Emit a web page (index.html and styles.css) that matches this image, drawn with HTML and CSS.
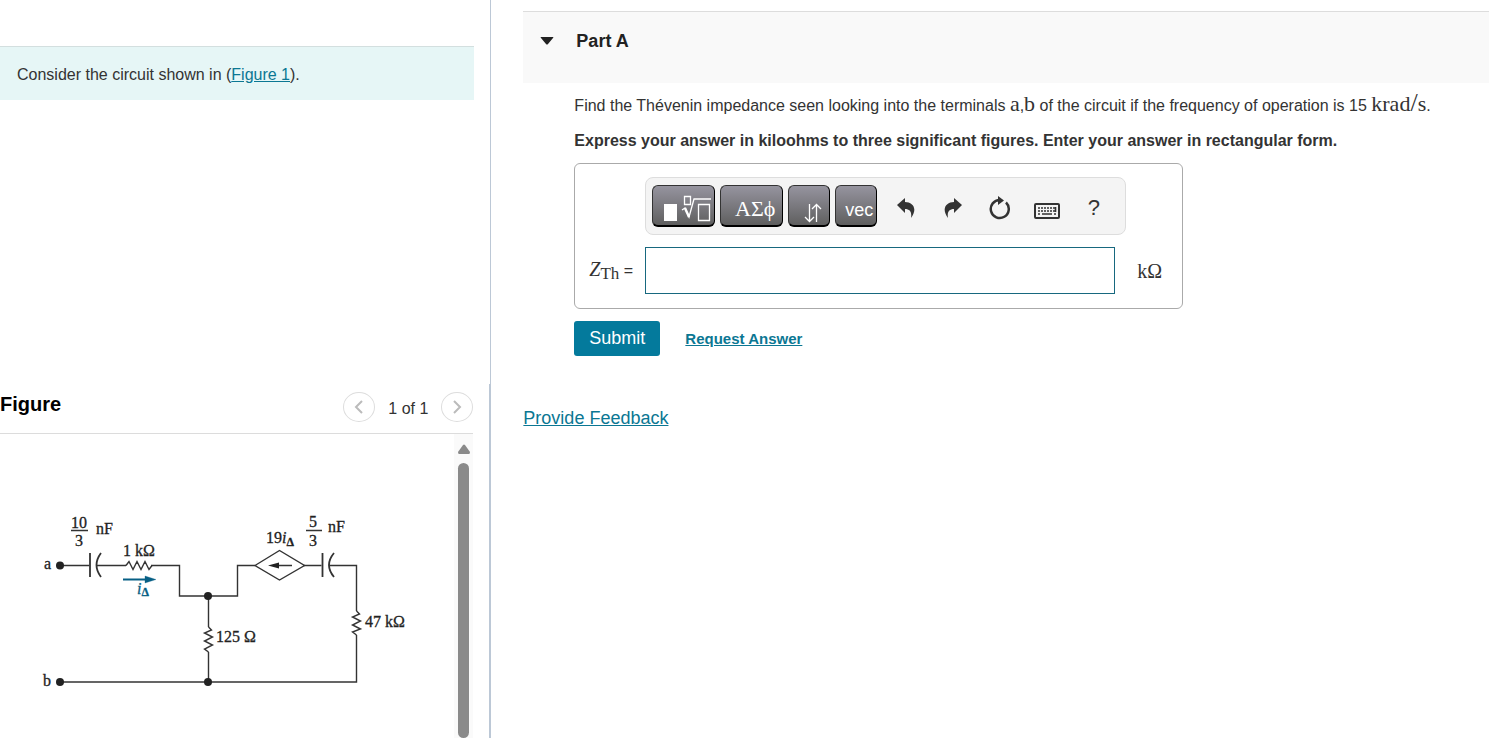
FILE: index.html
```html
<!DOCTYPE html>
<html lang="en">
<head>
    <meta charset="UTF-8">
    <meta name="viewport" content="width=device-width, initial-scale=1.0">
    <title>Thévenin Impedance</title>
    <link rel="stylesheet" href="styles.css">
</head>
<body>

<div class="page">
    <div class="left-panel">
        <section class="problem">
            <p class="intro">Consider the circuit shown in (<a href="#figure">Figure 1</a>).</p>
        </section>

        <section class="figure" id="figure">
            <div class="figure-header">
                <h2>Figure</h2>
                <div class="figure-nav">
                    <button type="button" class="nav-button" aria-label="Previous figure">
                        <svg width="12" height="16" viewBox="0 0 12 16"><path d="M9 2 3 8l6 6"/></svg>
                    </button>
                    <span>1 of 1</span>
                    <button type="button" class="nav-button" aria-label="Next figure">
                        <svg width="12" height="16" viewBox="0 0 12 16"><path d="m3 2 6 6-6 6"/></svg>
                    </button>
                </div>
            </div>

            <div class="figure-body">
                <svg class="circuit" width="440" height="304" viewBox="0 434 440 304" role="img" aria-label="Circuit diagram">
                    <!-- wires -->
                    <g class="wire">
                        <path d="M60 565.500H89.500M97 565.500H126M151 565.500H179.500V596H237.500V565.500H255"/>
                        <path d="M304 565.500H321.500M329 565.500H356.500V611M356.500 635V682H60M208.500 596V627M208.500 652V682"/>
                        <!-- resistors -->
                        <path d="M126 565.500l3-4 4 8 4-8 4 8 4-8 4 8 3-4"/>
                        <path d="M208.500 627l3 3-7 3 8 4-8 4 8 4-8 4 4 3"/>
                        <path d="M356.500 611l3 3-7 3 8 4-8 4 8 4-8 3 4 3"/>
                        <!-- dependent source -->
                        <path d="M255 565.500l24.500-15 25 15-25 14.500zM275 565.500h17"/>
                    </g>
                    <!-- capacitors -->
                    <g class="plate">
                        <path d="M90 553V577M101 553Q92 565 101 577"/>
                        <path d="M322.500 553V577M334 553Q324 565 334 577"/>
                    </g>
                    <path class="node" d="M268 565.500l11-3v6z"/>
                    <g class="node">
                        <circle cx="60" cy="565.500" r="4"/>
                        <circle cx="60" cy="682" r="4"/>
                        <circle cx="208" cy="596" r="4"/>
                        <circle cx="208" cy="682" r="4"/>
                    </g>
                    <!-- current -->
                    <path class="current-line" d="M123 579.500H147"/>
                    <path class="current" d="M145 576l11 3.500-11 3.500z"/>
                    <text class="current" x="137" y="594"><tspan class="italic">i</tspan><tspan class="sub" dy="2">Δ</tspan></text>
                    <!-- labels -->
                    <path class="wire" d="M71 530.500H88M306 530.500H322"/>
                    <text x="71" y="528">10</text>
                    <text x="75" y="546">3</text>
                    <text x="96" y="534">nF</text>
                    <text x="123" y="556">1 kΩ</text>
                    <text x="44" y="569">a</text>
                    <text x="43" y="686">b</text>
                    <text x="216" y="642">125 Ω</text>
                    <text x="266" y="543">19<tspan class="italic">i</tspan><tspan class="sub" dy="3">Δ</tspan></text>
                    <text x="309" y="527">5</text>
                    <text x="309" y="546">3</text>
                    <text x="328" y="532">nF</text>
                    <text x="365" y="627">47 kΩ</text>
                </svg>
                <div class="scrollbar">
                    <svg width="14" height="10" viewBox="0 0 14 10"><path d="M6 1q1-1 2 0l5 7q0 2-1 2H2q-1 0-1-2z"/></svg>
                    <div class="thumb"></div>
                </div>
            </div>
        </section>
    </div>

    <main class="right-panel">
        <div class="part-header">
            <svg width="14" height="8" viewBox="0 0 14 8"><path d="M1 0h12q1 0 0 1L8 7q-1 1-2 0L1 1q-1-1 0-1z"/></svg>
            <h1>Part A</h1>
        </div>

        <div class="part-content">
            <p>Find the Thévenin impedance seen looking into the terminals <span class="math">a</span>,<span class="math">b</span> of the circuit if the frequency of operation is 15 <span class="math">krad<span class="slash">/</span>s</span>.</p>
            <p class="instructions">Express your answer in kiloohms to three significant figures. Enter your answer in rectangular form.</p>

            <form>
                <div class="answer-box">
                    <div class="toolbar">
                        <button type="button" class="key key-wide" aria-label="Templates">
                            <svg width="50" height="28" viewBox="0 0 50 28">
                                <path class="solid" d="M2 9h13v17H2z"/>
                                <path d="M22.500 1.500h6v8h-6zM20 15l3-2 4 9 5-18h17M36.500 9.500h11v16h-11z"/>
                                <path class="heavy" d="M23 13l4 9"/>
                            </svg>
                        </button>
                        <button type="button" class="key key-wide key-greek">ΑΣϕ</button>
                        <button type="button" class="key key-arrows" aria-label="Subscripts and superscripts">
                            <svg width="18" height="20" viewBox="0 0 18 20"><path d="M5.500 1v17M1 14l4.500 4.500L10 14M12.500 19V2M8 6l4.500-4.500L17 6"/></svg>
                        </button>
                        <button type="button" class="key key-vec">vec</button>
                        <button type="button" class="tool" aria-label="Undo">
                            <svg width="18" height="20" viewBox="0 0 18 20"><path d="M0 7 8 0v4c8 0 13 7 6 16 1-6-1-9-6-9v4z"/></svg>
                        </button>
                        <button type="button" class="tool" aria-label="Redo">
                            <svg width="18" height="20" viewBox="0 0 18 20"><path d="M18 7 10 0v4C2 4-3 11 4 20c-1-6 1-9 6-9v4z"/></svg>
                        </button>
                        <button type="button" class="tool" aria-label="Reset">
                            <svg width="22" height="24" viewBox="0 0 22 24"><path class="ring" d="M17 6.500a9 9 0 1 1-6-2.500"/><path d="M9 0l6 4.500L9 9z"/></svg>
                        </button>
                        <button type="button" class="tool" aria-label="Keyboard">
                            <svg class="keyboard" width="26" height="16" viewBox="0 0 26 16">
                                <rect x="1" y="1" width="24" height="14" rx="1"/>
                                <g class="keyboard-keys">
                                    <path d="M4 5h17" stroke-dasharray="2 1"/>
                                    <path d="M4 8h15" stroke-dasharray="2 1"/>
                                    <path d="M4 11h2M8 11h10M20 11h2M21.500 4v5M19 8h3"/>
                                </g>
                            </svg>
                        </button>
                        <button type="button" class="tool tool-help" aria-label="Help">?</button>
                    </div>
                    <label for="answer"><span class="math"><i>Z</i><sub>Th</sub></span> =</label>
                    <input type="text" id="answer" name="answer" autocomplete="off">
                    <span class="math unit">kΩ</span>
                </div>
                <div class="actions">
                    <button type="submit" class="submit">Submit</button>
                    <a href="#">Request Answer</a>
                </div>
            </form>
        </div>

        <a href="#" class="feedback">Provide Feedback</a>
    </main>
</div>

</body>
</html>
```
FILE: styles.css
```css
* {
    box-sizing: border-box;
}

body {
    margin: 0;
    font-family: "Liberation Sans", Arial, sans-serif;
    font-size: 16px;
    line-height: 20px;
    color: #333;
    background: white;
}

h1, h2, p {
    margin: 0;
}

a {
    color: #0b7793;
}

button {
    font-family: inherit;
    padding: 0;
    cursor: pointer;
}

.page {
    display: grid;
    grid-template-columns: 33% 1fr;
    min-height: 100vh;
}

/* Left side */
.left-panel {
    display: flex;
    flex-direction: column;
}

.problem {
    flex: 0 0 52vh;
    padding: 46px 16px 0 0;
    border-right: 1px solid #bcc8d6;
}

.intro {
    padding: 18px 17px 15px;
    background: #e6f6f6;
    border-top: 1px solid #d3dfdf;
}

.figure {
    flex: 1;
    display: flex;
    flex-direction: column;
    padding-right: 16px;
    border-right: 2px solid #bcc8d6;
}

.figure-header {
    display: flex;
    justify-content: space-between;
    align-items: center;
    height: 50px;
    padding-bottom: 2px;
    border-bottom: 1px solid #dcdcdc;
}

.figure-header h2 {
    padding-bottom: 6px;
    font-size: 20px;
    line-height: 24px;
    color: black;
}

.figure-nav {
    display: flex;
    align-items: center;
    gap: 13px;
}

.figure-nav span {
    padding-top: 4px;
}

.nav-button {
    display: flex;
    justify-content: center;
    align-items: center;
    width: 32px;
    height: 30px;
    background: white;
    border: 1px solid #ddd;
    border-radius: 50%;
}

.nav-button path {
    fill: none;
    stroke: #bbb;
    stroke-width: 2;
}

.figure-body {
    flex: 1;
    display: flex;
    justify-content: space-between;
}

.circuit {
    font-family: "Liberation Serif", serif;
    font-size: 16px;
    fill: #222;
}

.circuit text {
    stroke: #222;
    stroke-width: 0.3;
}

.circuit .wire {
    fill: none;
    stroke: #333;
    stroke-width: 1.4;
}

.circuit .plate {
    fill: none;
    stroke: #333;
    stroke-width: 1.8;
}

.circuit .current {
    fill: #075f85;
    stroke: #075f85;
    stroke-width: 0.3;
}

.circuit .current-line {
    stroke: #075f85;
    stroke-width: 2;
}

.circuit .italic {
    font-style: italic;
}

.circuit .sub {
    font-size: 12px;
    font-weight: bold;
}

.scrollbar {
    display: flex;
    flex-direction: column;
    align-items: center;
    gap: 9px;
    width: 19px;
    padding-top: 10px;
    background: #fafafa;
    fill: #8a8a8a;
}

.thumb {
    flex: 1;
    width: 11px;
    background: #8a8a8a;
    border-radius: 6px;
}

/* Right side */
.right-panel {
    padding: 11px 0 0 32px;
}

.part-header {
    display: flex;
    align-items: flex-start;
    gap: 22px;
    height: 72px;
    padding: 19px 17px;
    background: #f9f9f9;
    border-top: 1px solid #ddd;
    color: #222;
}

.part-header svg {
    margin-top: 6px;
    fill: #222;
}

.part-header h1 {
    font-size: 18px;
    line-height: 20px;
}

.part-content {
    padding: 11px 16px 0 51px;
}

.part-content p {
    line-height: 24px;
}

.part-content .instructions {
    margin: 11px 0 10px;
    font-weight: bold;
}

.math {
    font-family: "Liberation Serif", serif;
    font-size: 20px;
    line-height: 0;
}

p .math {
    font-size: 22px;
}

p .slash {
    font-size: 26px;
}

.answer-box {
    display: grid;
    grid-template-columns: 70px 470px 1fr;
    row-gap: 12px;
    align-items: center;
    max-width: 609px;
    padding: 13px 0 14px;
    border: 1px solid #aaa;
    border-radius: 6px;
}

.toolbar {
    grid-column: 2 / 4;
    justify-self: start;
    display: flex;
    align-items: center;
    height: 58px;
    padding: 0 8px 0 6px;
    background: #f4f4f4;
    border: 1px solid #ddd;
    border-radius: 8px;
}

.key {
    display: flex;
    justify-content: flex-end;
    align-items: flex-end;
    width: 42px;
    height: 42px;
    margin-right: 5px;
    background: linear-gradient(#96949f, #5f5f5f);
    border: 1px solid #333;
    border-right-color: black;
    border-bottom: 2px solid black;
    border-radius: 6px;
    color: white;
}

.key-wide {
    width: 63px;
}

.key svg {
    margin: 0 2px 2px 0;
    fill: none;
    stroke: white;
    stroke-width: 1.3;
}

.key-arrows svg {
    margin-right: 7px;
}

.key .solid {
    fill: white;
    stroke: none;
}

.key .heavy {
    stroke-width: 2.4;
}

.key-greek {
    padding: 0 7px 3px 0;
    font-family: "Liberation Serif", serif;
    font-size: 22px;
}

.key-vec {
    padding: 0 3px 4px 0;
    font-size: 18px;
}

.tool {
    display: flex;
    justify-content: center;
    align-items: center;
    width: 47px;
    height: 42px;
    padding-top: 4px;
    background: none;
    border: none;
    color: #333;
    fill: #333;
}

.tool .ring {
    fill: none;
    stroke: #333;
    stroke-width: 2.5;
}

.tool .keyboard {
    margin-top: 6px;
    fill: none;
    stroke: #333;
    stroke-width: 2;
}

.keyboard-keys {
    stroke-width: 1.6;
}

.tool-help {
    font-size: 22px;
}

.answer-box label {
    padding-left: 14px;
}

.answer-box sub {
    font-size: 17px;
    line-height: 0;
    vertical-align: -3px;
}

.answer-box input {
    width: 100%;
    height: 47px;
    padding: 0 10px;
    border: 1px solid #17687f;
    font-size: 18px;
}

.unit {
    padding-left: 22px;
}

.actions {
    display: flex;
    align-items: center;
    gap: 25px;
    margin-top: 12px;
}

.submit {
    width: 86px;
    height: 35px;
    background: #047a9c;
    border: none;
    border-radius: 3px;
    color: white;
    font-size: 18px;
}

.actions a {
    font-size: 15px;
    font-weight: bold;
}

.feedback {
    display: inline-block;
    margin-top: 52px;
    font-size: 18px;
}
```
